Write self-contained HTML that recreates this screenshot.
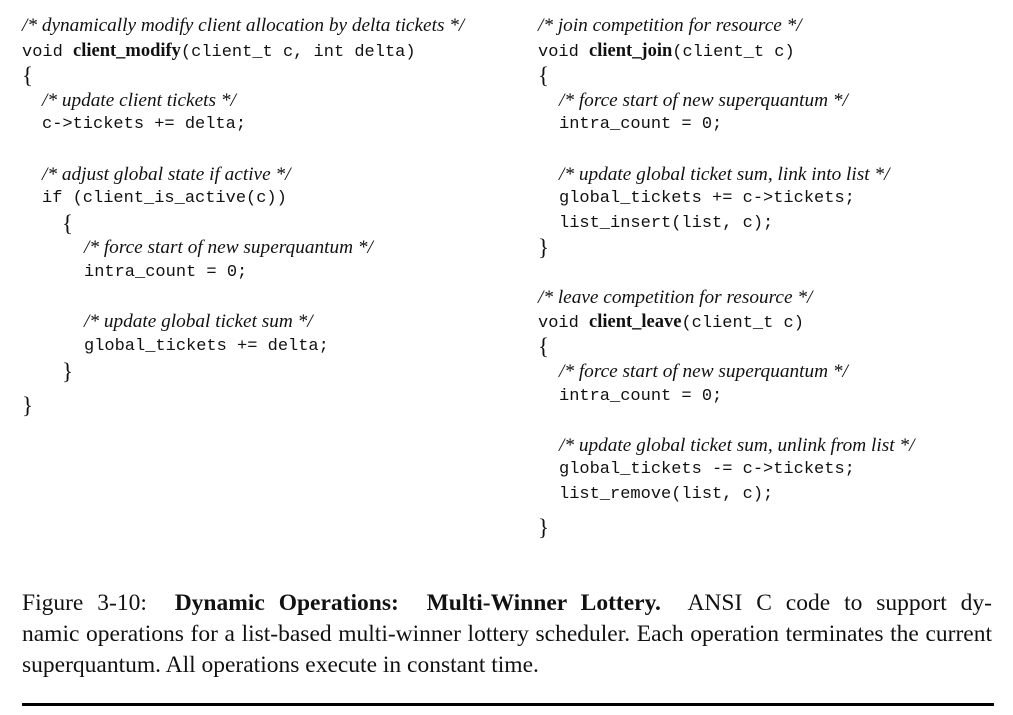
<!DOCTYPE html>
<html><head><meta charset="utf-8"><style>
body{margin:0;width:1013px;height:715px;background:#fff;position:relative;overflow:hidden;color:#111}
.l{position:absolute;height:20px;line-height:20px;white-space:pre;font-family:"Liberation Mono",monospace;font-size:17px}
.c{font-family:"Liberation Serif",serif;font-style:italic;font-size:19.3px}
.b{font-family:"Liberation Serif",serif;font-weight:bold;font-size:18.5px}
.br{font-family:"Liberation Serif",serif;font-size:23px}
.cap{position:absolute;left:22px;width:970px;font-family:"Liberation Serif",serif;font-size:23.5px;line-height:31px;white-space:nowrap;text-align:justify;text-align-last:justify}
.rule{position:absolute;left:22px;top:703px;width:972px;height:3px;background:#000}
</style></head><body>
<div class="l c" style="left:22px;top:16px">/* dynamically modify client allocation by delta tickets */</div>
<div class="l" style="left:22px;top:41px">void <span class="b">client_modify</span>(client_t c, int delta)</div>
<div class="l br" style="left:22px;top:66px">{</div>
<div class="l c" style="left:42px;top:91px">/* update client tickets */</div>
<div class="l" style="left:42px;top:115px">c-&gt;tickets += delta;</div>
<div class="l c" style="left:42px;top:165px">/* adjust global state if active */</div>
<div class="l" style="left:42px;top:189px">if (client_is_active(c))</div>
<div class="l br" style="left:62px;top:214px">{</div>
<div class="l c" style="left:84px;top:238px">/* force start of new superquantum */</div>
<div class="l" style="left:84px;top:263px">intra_count = 0;</div>
<div class="l c" style="left:84px;top:312px">/* update global ticket sum */</div>
<div class="l" style="left:84px;top:337px">global_tickets += delta;</div>
<div class="l br" style="left:62px;top:362px">}</div>
<div class="l br" style="left:22px;top:396px">}</div>

<div class="l c" style="left:538px;top:16px">/* join competition for resource */</div>
<div class="l" style="left:538px;top:41px">void <span class="b">client_join</span>(client_t c)</div>
<div class="l br" style="left:538px;top:66px">{</div>
<div class="l c" style="left:559px;top:91px">/* force start of new superquantum */</div>
<div class="l" style="left:559px;top:115px">intra_count = 0;</div>
<div class="l c" style="left:559px;top:165px">/* update global ticket sum, link into list */</div>
<div class="l" style="left:559px;top:189px">global_tickets += c-&gt;tickets;</div>
<div class="l" style="left:559px;top:214px">list_insert(list, c);</div>
<div class="l br" style="left:538px;top:238px">}</div>
<div class="l c" style="left:538px;top:288px">/* leave competition for resource */</div>
<div class="l" style="left:538px;top:312px">void <span class="b">client_leave</span>(client_t c)</div>
<div class="l br" style="left:538px;top:337px">{</div>
<div class="l c" style="left:559px;top:362px">/* force start of new superquantum */</div>
<div class="l" style="left:559px;top:387px">intra_count = 0;</div>
<div class="l c" style="left:559px;top:436px">/* update global ticket sum, unlink from list */</div>
<div class="l" style="left:559px;top:460px">global_tickets -= c-&gt;tickets;</div>
<div class="l" style="left:559px;top:485px">list_remove(list, c);</div>
<div class="l br" style="left:538px;top:518px">}</div>

<div class="cap" style="top:588px">Figure 3-10:&nbsp; <b>Dynamic Operations:&nbsp; Multi-Winner Lottery.</b>&nbsp; ANSI C code to support dy-</div>
<div class="cap" style="top:619px">namic operations for a list-based multi-winner lottery scheduler. Each operation terminates the current</div>
<div class="cap" style="top:650px;text-align:left;text-align-last:left">superquantum. All operations execute in constant time.</div>
<div class="rule"></div>
</body></html>
